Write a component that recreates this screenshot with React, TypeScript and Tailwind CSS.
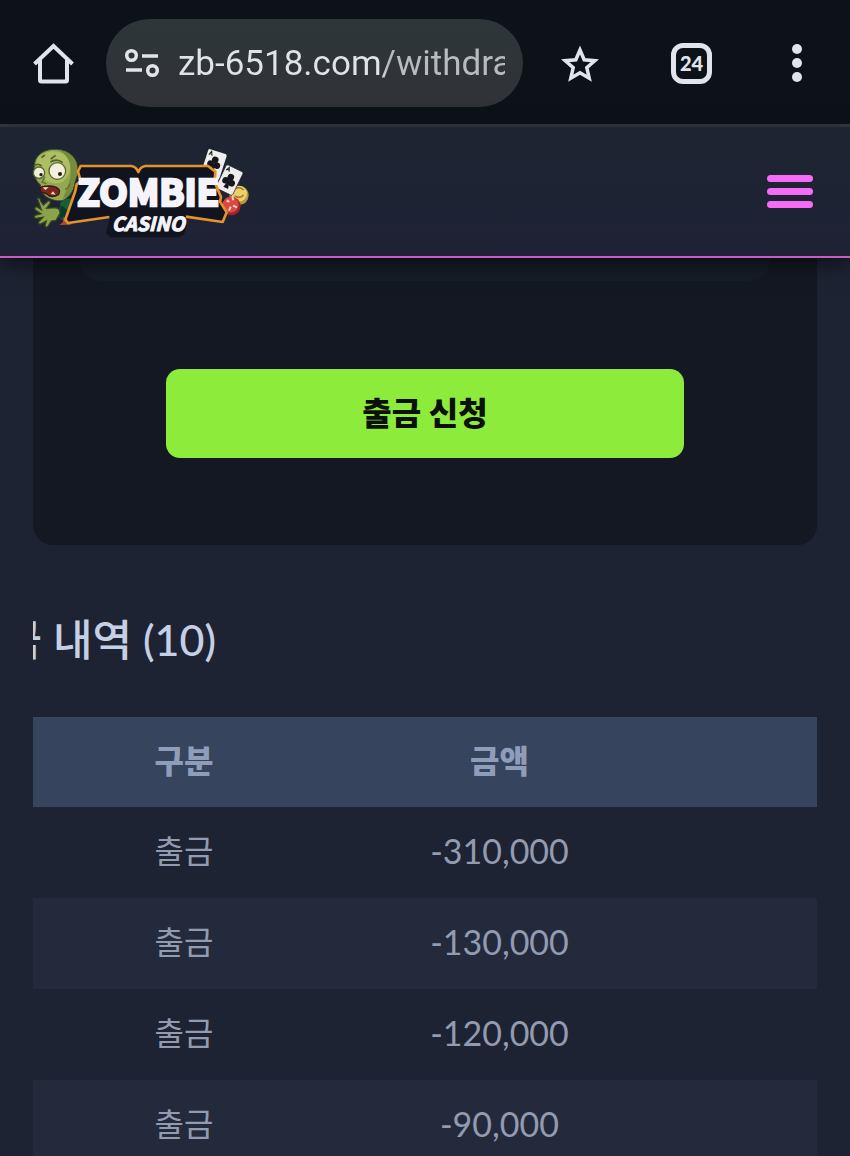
import React from "react";

const rows = [
  { type: "출금", amount: "-310,000" },
  { type: "출금", amount: "-130,000" },
  { type: "출금", amount: "-120,000" },
  { type: "출금", amount: "-90,000" },
];

function BrowserBar() {
  return (
    <div className="flex h-[127px] shrink-0 items-center border-b-[3px] border-[#343a42] bg-[#0d1219] pt-[2px] pr-12 pl-[33px] text-[#e1e5eb]">
      <button type="button" aria-label="Home">
        <svg className="h-[41px] w-[41px]" viewBox="0 0 41 41" fill="none" stroke="currentColor" strokeWidth="4">
          <path d="M1.500 21 20.500 3l19 18" />
          <path d="M7 17v20q0 1.500 1.500 1.500h24q1.500 0 1.500-1.500V17" />
        </svg>
      </button>
      <div className="ml-8 flex h-[88px] min-w-0 flex-1 items-center rounded-full bg-gradient-to-b from-[#2d3638] to-[#313238] pr-[18px] pl-[19px]">
        <svg className="mr-[19px] h-[30px] w-[34px] shrink-0" viewBox="0 0 34 30" fill="none" stroke="currentColor" strokeWidth="3.500">
          <circle cx="6.500" cy="7.500" r="4.800" />
          <path d="M17 8h16M1 22h16" />
          <circle cx="27.500" cy="22.500" r="4.800" />
        </svg>
        <input
          type="text"
          aria-label="Address"
          defaultValue="zb-6518.com/withdrawal"
          className="w-full min-w-0 bg-gradient-to-r from-[#e0e4ea] from-[62%] to-[#b8bcc2] to-[64%] bg-clip-text pt-[2px] font-[Roboto,sans-serif] text-[35px] text-transparent outline-none"
        />
      </div>
      <button type="button" aria-label="Bookmark" className="ml-[38px]">
        <svg className="h-[38px] w-[38px]" viewBox="0 0 38 38" fill="none" stroke="currentColor" strokeWidth="3.500">
          <path d="m19 6 4.200 9.800 10.600.9-8 7 2.400 10.500L19 28.700l-9.200 5.500 2.400-10.500-8-7 10.600-.9z" />
        </svg>
      </button>
      <button
        type="button"
        aria-label="Tabs"
        className="ml-[72px] flex h-[41px] w-[41px] items-center justify-center rounded-xl border-[5px] border-[#e1e5eb] font-[Lato,sans-serif] text-xl font-black"
      >
        24
      </button>
      <button type="button" aria-label="More" className="ml-20 flex flex-col gap-1">
        <span className="h-[10px] w-[10px] rounded-full bg-[#e1e5eb]" />
        <span className="h-[10px] w-[10px] rounded-full bg-[#e1e5eb]" />
        <span className="h-[10px] w-[10px] rounded-full bg-[#e1e5eb]" />
      </button>
    </div>
  );
}

function Club({ x, y, r }: { x: number; y: number; r: number }) {
  return (
    <g fill="#16151b">
      <circle cx={x} cy={y - r} r={r} />
      <circle cx={x - r} cy={y + r / 2} r={r} />
      <circle cx={x + r} cy={y + r / 2} r={r} />
      <path d={`M${x} ${y - r / 2}l${r * 0.8} ${r * 3}h${-r * 1.6}z`} />
    </g>
  );
}

function Logo() {
  return (
    <svg className="h-[110px] w-[240px]" viewBox="0 0 720 330" role="img" aria-label="Zombie Casino">
      {/* zombie */}
      <path d="M121 197q20-20 42-8l6 45-28 26-26-20z" fill="#166039" />
      <path d="m122 204 25 17-10 27-19-7z" fill="#0b3a2c" />
      <path
        d="M52 184q8-4 10 8l8 12 14-12q10-2 6 8l-10 14 28-2q14 4 12 18l-12 20-14 2-10 16q-8 6-9-3l4-13-17 9q-9 1-6-7l13-13-20 3q-10-2-4-9l18-5-16-10q-6-8 3-11l14 9z"
        fill="#8ba34a"
        stroke="#34441f"
        strokeWidth="4"
      />
      <path
        d="M44 78C48 51 77 35 110 37c40 2 64 29 63 64 0 17-7 25-9 38-3 22-15 39-32 50-17 7-44-1-58-14-9-8-14-21-13-32-12-8-23-28-17-65z"
        fill="#94a951"
        stroke="#394926"
        strokeWidth="3"
      />
      <path d="M49 73c10-25 42-35 68-28 26 8 37 31 32 57-7 25-22 36-41 37-33 0-61-27-59-66z" fill="#aebe63" />
      <path d="M112 39c42 2 62 31 60 61-1 20-8 29-11 45-4 22-18 36-34 43 15-35 23-50 25-83 2-34-15-58-40-66z" fill="#758c3b" />
      <circle cx="57" cy="107" r="17" fill="#f0eedc" stroke="#59652d" strokeWidth="4" />
      <circle cx="112" cy="102" r="25" fill="#f2efdc" stroke="#59652d" strokeWidth="4" />
      <circle cx="63" cy="113" r="5" fill="#261b13" />
      <circle cx="120" cy="111" r="6" fill="#261b13" />
      <path d="M42 87q11-10 23 0M91 75q20-12 37 2M64 62l11-8m17 12 15-11" fill="none" stroke="#52632c" strokeWidth="5" />
      <path d="m75 119-9 17 13 4M135 157q12-4 14-17" fill="none" stroke="#61722e" strokeWidth="4" />
      <path d="M61 151q27-8 48 0 15 8 7 21-17 11-30 4-9-11-21-8-7-7-4-17z" fill="#802323" stroke="#351d17" strokeWidth="4" />
      <path d="m68 151 8 8 10-8m6 20 7-8 8 10" fill="#f1e4ad" />
      <path d="m130 239 18 6 6 18-36 1 11-9z" fill="#a64c33" />

      {/* cards and chips */}
      <g transform="rotate(18 582 80)">
        <rect x="553" y="42" width="58" height="80" rx="5" fill="#f0efed" />
        <path d="m559 59 5-12 5 12m-8-4h6" fill="none" stroke="#222" strokeWidth="3" />
        <Club x={582} y={78} r={10} />
      </g>
      <circle cx="657" cy="175" r="29" fill="#b99736" />
      <circle cx="657" cy="170" r="24" fill="#ead06a" />
      <path d="M645 155q15-8 26 4M644 177q15 9 27-3" fill="none" stroke="#a87c27" strokeWidth="5" />
      <g transform="rotate(26 628 130)">
        <rect x="600" y="90" width="56" height="78" rx="5" fill="#eeeceb" stroke="#22222b" strokeWidth="2" />
        <path d="m606 107 5-12 5 12m-8-4h6" fill="none" stroke="#222" strokeWidth="3" />
        <Club x={628} y={130} r={10} />
      </g>
      <circle cx="634" cy="207" r="28" fill="#9f2428" />
      <circle cx="632" cy="203" r="24" fill="#dc4741" />
      <path d="m620 190 8 5m9-15 3 10m-1 16 12 5m-24 10 5-12" stroke="#f5d8d1" strokeWidth="6" />

      {/* plate */}
      <path
        d="M182 88h156q12 2 19 16 7-14 19-16h190l20 17-2 32 19 44-3 14 20 32-10 28-110-16 0 28-8 26-16 8H272l-14-12 12-50-126 18-8-10 30-88 2-20 14-10-8-30z"
        fill="#11131f"
      />
      <path
        d="m268 240-124 18-8-10 30-86 4-20 12-10-8-29 8-16h152q14 2 21 18 7-16 21-18h188l22 17-2 32 19 44-3 14 20 32-12 29-110-16"
        fill="none"
        stroke="#e6922a"
        strokeWidth="8"
        strokeLinejoin="round"
      />

      <g fontFamily="'Noto Sans CJK KR', sans-serif" fontWeight="bold" fill="#f5f4fa" stroke="#f5f4fa">
        <text x="172" y="206" fontSize="111" strokeWidth="8">
          ZOMBIE
        </text>
        <text x="275" y="281" fontSize="58" fontStyle="italic" strokeWidth="3">
          CASINO
        </text>
      </g>
    </svg>
  );
}

function SiteHeader() {
  return (
    <header className="relative z-10 flex h-[131px] shrink-0 items-center justify-between border-b-2 border-[#c65dc4] bg-gradient-to-b from-[#1d2531] to-[#1f2236] pr-[37px] pl-5 shadow-[0_6px_20px_rgba(0,0,0,0.55)]">
      <a href="#home">
        <Logo />
      </a>
      <button type="button" aria-label="Menu" className="flex w-[46px] flex-col gap-[6px]">
        <span className="h-[7px] rounded-full bg-[#f56bf5]" />
        <span className="h-[7px] rounded-full bg-[#f56bf5]" />
        <span className="h-[7px] rounded-full bg-[#f56bf5]" />
      </button>
    </header>
  );
}

export default function App() {
  return (
    <div className="flex h-screen flex-col overflow-hidden bg-[#1d2332] font-[Lato,'Noto_Sans_CJK_KR',sans-serif]">
      <BrowserBar />
      <SiteHeader />
      <main className="px-[33px]">
        <section className="flex flex-col items-center rounded-b-[20px] bg-[#131823] pb-[87px]">
          <div className="h-[23px] w-[88%] rounded-b-[20px] bg-[#161d28]" />
          <button
            type="button"
            className="mt-[88px] h-[89px] w-[66%] rounded-[14px] bg-[#8deb3c] pb-[2px] text-[32px] font-black text-[#0b1008]"
          >
            출금 신청
          </button>
        </section>

        <h2 className="mt-[65px] flex h-[60px] w-[183px] items-center justify-end overflow-hidden text-[43px] font-medium whitespace-nowrap text-[#c5d0e5]">
          출금 내역 (10)
        </h2>

        <table className="mt-[47px] w-full table-fixed text-center text-[#929bb0]">
          <thead>
            <tr className="h-[90px] bg-[#36445e] text-[32px] text-[#8f9dbb]">
              <th scope="col" className="w-[38.5%] pb-[2px] font-black">구분</th>
              <th scope="col" className="w-[42%] pb-[2px] font-black">금액</th>
              <td />
            </tr>
          </thead>
          <tbody>
            {rows.map((row) => (
              <tr key={row.amount} className="h-[91px] even:bg-[#232a3c]">
                <td className="pb-1 text-[32px]">{row.type}</td>
                <td className="pb-1 text-[34px]">{row.amount}</td>
                <td />
              </tr>
            ))}
          </tbody>
        </table>
      </main>
    </div>
  );
}
